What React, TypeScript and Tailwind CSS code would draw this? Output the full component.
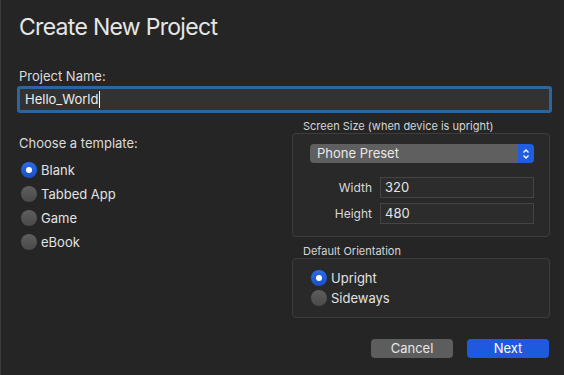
import { type ReactNode } from "react";

function Radio({ checked, label }: { checked?: boolean; label: string }) {
  return (
    <div className="flex items-center gap-[4px]">
      <span
        className={
          checked
            ? "flex h-[16px] w-[16px] items-center justify-center rounded-full bg-gradient-to-b from-[#2a6ce8] to-[#1a4fc8]"
            : "flex h-[16px] w-[16px] items-center justify-center rounded-full bg-gradient-to-b from-[#5e5e5e] to-[#4a4a4a]"
        }
      >
        {checked && <span className="h-[6px] w-[6px] rounded-full bg-white" />}
      </span>
      <span className="text-[13px] leading-[16px] text-[#e2e2e2]">{label}</span>
    </div>
  );
}

function GroupBox({ title, children, className }: { title: string; children: ReactNode; className?: string }) {
  return (
    <div>
      <div className="pl-[11px] text-[11px] leading-[13px] text-[#d6d6d6]">{title}</div>
      <div className={"rounded-[4px] border border-[#3d3d3d] bg-[#292929] " + (className ?? "")}>
        {children}
      </div>
    </div>
  );
}

function SizeField({ label, value }: { label: string; value: string }) {
  return (
    <div className="flex items-center">
      <span className="w-[80px] pr-[8px] text-right text-[12px] text-[#d8d8d8]">{label}</span>
      <div className="flex h-[21px] w-[154px] items-center border border-[#444] bg-[#2c2c2c] pl-[4px] text-[13px] text-[#e4e4e4]">
        {value}
      </div>
    </div>
  );
}

export default function App() {
  return (
    <div className="h-[375px] w-[564px] overflow-hidden border-l border-[#3a3a3a] bg-[#252525] pl-[18px] font-['Inter',sans-serif] text-[#e0e0e0]">
      <h1 className="pt-[13px] text-[23px] leading-[28px] tracking-[-0.7px] text-[#e6e6e6]">Create New Project</h1>

      <div className="mt-[27px] text-[13px] leading-[16px] text-[#dcdcdc]">Project Name:</div>
      <div className="ml-[-2px] mt-[2px] flex h-[27px] w-[535px] items-center rounded-[3px] border-[3px] border-[#2b66a0] bg-[#323232] pl-[5px] text-[13px] text-[#ececec]">
        Hello_World
        <span className="ml-[1px] h-[17px] w-[1px] bg-white" />
      </div>

      <div className="mt-[7px] flex">
        <div className="w-[273px] pt-[15px]">
          <div className="text-[13px] leading-[16px] text-[#dcdcdc]">Choose a template:</div>
          <div className="ml-[2px] mt-[7px] flex flex-col">
            {["Blank", "Tabbed App", "Game", "eBook"].map((t, i) => (
              <div key={t} className="flex h-[24px] items-center">
                <Radio checked={i === 0} label={t} />
              </div>
            ))}
          </div>
        </div>

        <div className="w-[258px]">
          <GroupBox title="Screen Size (when device is upright)" className="h-[104px] pl-[17px] pr-[15px] pt-[10px]">
            <div className="flex h-[19px] items-stretch overflow-hidden rounded-[4px]">
              <div className="flex flex-1 items-center bg-[#5f5f5f] pl-[7px] text-[13px] text-[#e8e8e8]">Phone Preset</div>
              <div className="flex w-[16px] items-center justify-center bg-[#1f5ee0]">
                <svg width="8" height="12" viewBox="0 0 8 12" fill="none" stroke="white" strokeWidth="1.3">
                  <path d="M1.5 4.5 L4 2 L6.5 4.5" />
                  <path d="M1.5 7.5 L4 10 L6.5 7.5" />
                </svg>
              </div>
            </div>
            <div className="ml-[-17px] mt-[14px] flex flex-col gap-[5px] pl-[7px]">
              <SizeField label="Width" value="320" />
              <SizeField label="Height" value="480" />
            </div>
          </GroupBox>

          <div className="mt-[8px]">
            <GroupBox title="Default Orientation" className="h-[60px] pl-[18px] pt-[9px]">
              <div className="flex h-[20px] items-center">
                <Radio checked label="Upright" />
              </div>
              <div className="flex h-[20px] items-center">
                <Radio label="Sideways" />
              </div>
            </GroupBox>
          </div>

          <div className="mt-[21px] flex justify-end gap-[14px] pr-[1px]">
            <button className="h-[19px] w-[82px] rounded-[4px] bg-[#5d5d5d] text-[13px] text-[#e6e6e6]">Cancel</button>
            <button className="h-[19px] w-[82px] rounded-[4px] bg-[#1f5ade] text-[13px] text-white">Next</button>
          </div>
        </div>
      </div>
    </div>
  );
}
